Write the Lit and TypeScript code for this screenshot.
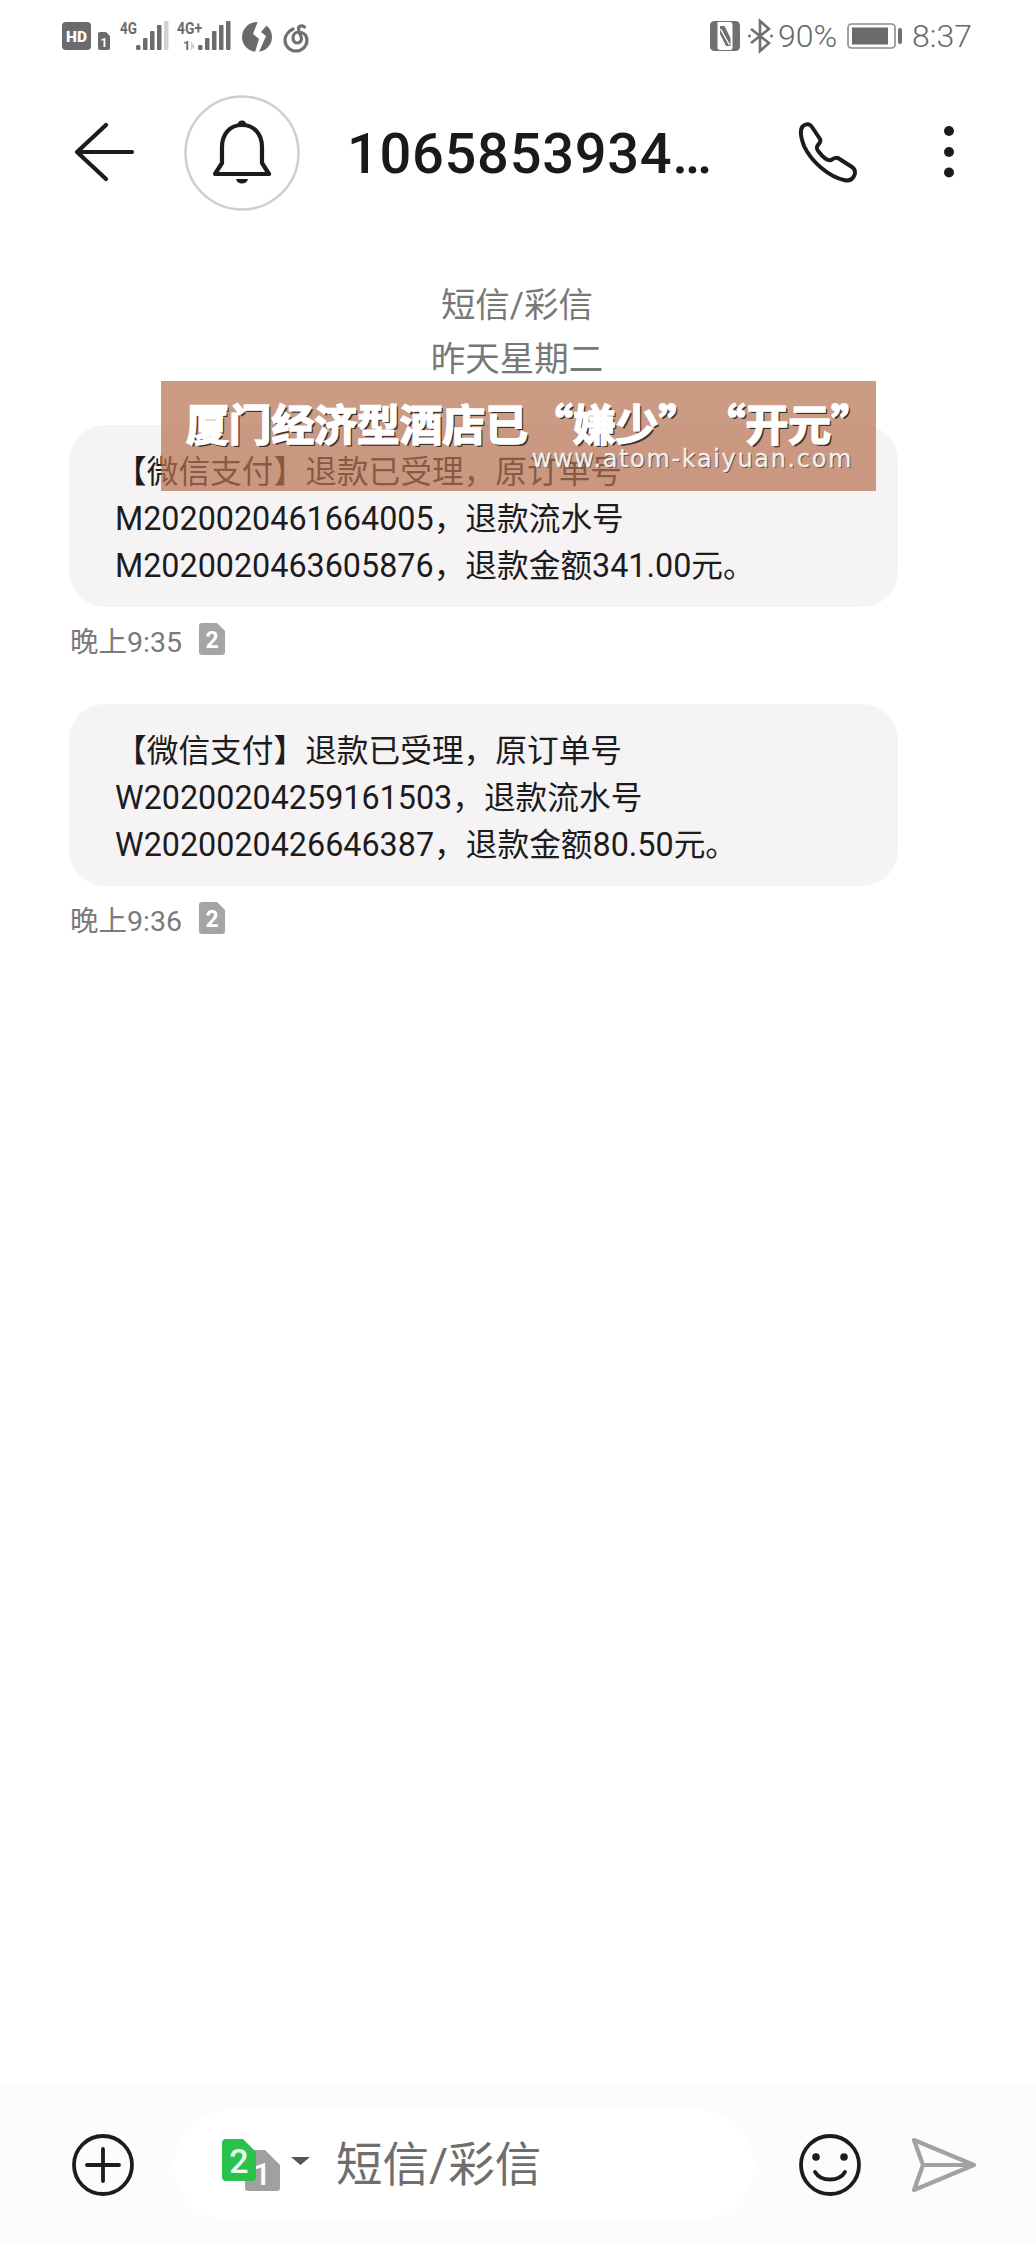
import { LitElement, html, css, svg } from "lit";
import { customElement } from "lit/decorators.js";

const bars = (x0: number, lastLight: boolean) => svg`
  <rect x="${x0}" y="25" width="4.5" height="5" rx="1.5" fill="#6c6c6c"/>
  <rect x="${x0 + 7}" y="18" width="4.5" height="12" rx="1" fill="#6c6c6c"/>
  <rect x="${x0 + 14}" y="11" width="4.5" height="19" rx="1" fill="#6c6c6c"/>
  <rect x="${x0 + 21}" y="5" width="4.5" height="25" rx="1" fill="#6c6c6c"/>
  <rect x="${x0 + 28}" y="1" width="4.5" height="29" rx="1" fill="${lastLight ? "#d2d2d2" : "#6c6c6c"}"/>`;

const simBadge = svg`<svg class="sim" width="26" height="32" viewBox="0 0 26 32">
  <path d="M3 0H18L26 8V29a3 3 0 0 1-3 3H3a3 3 0 0 1-3-3V3a3 3 0 0 1 3-3Z" fill="#a5a5a5"/>
  <text x="13" y="25" text-anchor="middle" font-family="Roboto" font-weight="700" font-size="23" fill="#fff">2</text>
</svg>`;

const mixed = (line: string) =>
  line.split(/([A-Za-z0-9.]+)/).map((part, i) => (i % 2 ? html`<span class="lat">${part}</span>` : part));

const bubble = (lines: string[]) => html`<div class="bubble">${lines.map((l) => html`<div>${mixed(l)}</div>`)}</div>`;

@customElement("app-root")
export class AppRoot extends LitElement {
  static styles = css`
    :host { display: block; width: 1036px; height: 2246px; background: #fff; overflow: hidden; position: relative; font-family: "Roboto", "Noto Sans CJK SC", sans-serif; }
    .page { display: flex; flex-direction: column; height: 2246px; }
    svg { display: block; flex: none; overflow: visible; }

    .status { height: 74px; box-sizing: border-box; padding: 20px 64px 0 62px; display: flex; align-items: flex-start; color: #686868; flex: none; }
    .status-left { display: flex; align-items: flex-start; }
    .status-right { margin-left: auto; display: flex; align-items: center; height: 32px; }
    .gap7 { margin-left: 7px; }
    .gap8 { margin-left: 8px; }
    .cloud { margin: 2px 0 0 10px; }
    .pct { font-size: 32px; font-weight: 300; margin: 0 10px 0 5px; line-height: 32px; }
    .clock { font-size: 32px; font-weight: 300; margin-left: 10px; line-height: 32px; }

    .header { height: 156px; flex: none; display: flex; align-items: center; padding-left: 74px; }
    .avatar { margin-left: 50px; width: 116px; height: 116px; margin-top: 2px; }
    .title { margin-left: 47px; width: 451px; font-size: 56px; font-weight: 500; color: #1a1a1a; line-height: 60px; white-space: nowrap; letter-spacing: 0.7px; margin-top: 4px; }
    .phone { margin-top: 1px; }
    .more { margin-left: 85px; }

    .thread { flex: 1; padding: 48px 0 0 69px; box-sizing: border-box; }
    .date { width: 896px; text-align: center; font-size: 34.5px; line-height: 54px; color: #787878; }
    .dates { margin-bottom: 39px; }
    .bubble { width: 829px; height: 182px; box-sizing: border-box; padding: 25px 46px 0; background: #f6f3f5; border-radius: 36px; font-size: 31.7px; line-height: 46px; color: #1c1c1c; white-space: nowrap; }
    .lat { font-size: 32.3px; }
    .meta { display: flex; align-items: center; height: 34px; margin: 15px 0 48px 1px; font-size: 28.5px; color: #7a7a7a; }
    .sim { margin-left: 17px; }

    .footer { flex: none; height: 163px; box-sizing: border-box; background: #fcfbfd; display: flex; align-items: center; padding: 0 0 0 72px; }
    .pill { margin-left: 40px; width: 580px; height: 110px; box-sizing: border-box; background: #fff; border-radius: 55px; display: flex; align-items: center; padding-left: 48px; }
    .pill-text { margin-left: 26px; font-size: 46.5px; color: #6e6e6e; line-height: 60px; }
    .caret { margin-left: 11px; margin-top: -8px; }
    .smile { margin-left: 45px; }
    .send { margin-left: 51px; }

    .watermark { position: absolute; left: 161px; top: 381px; width: 715px; height: 110px; box-sizing: border-box; background: rgba(183, 114, 82, 0.71); padding: 16px 0 0 25px; }
    .wm-title { font-family: "Noto Sans CJK SC", sans-serif; font-size: 42.75px; line-height: 50px; font-weight: 700; color: #fff; white-space: nowrap; -webkit-text-stroke: 1.6px #fff; text-shadow: 2px 2px 0 #3c3430; }
    .q-open, .q-close { display: inline-block; }
    .q-open { width: 45px; text-align: right; }
    .q-close { width: 42px; text-align: left; }
    .wm-url { position: absolute; right: 23px; bottom: 18px; font-family: "DejaVu Sans", sans-serif; font-size: 24px; line-height: 28px; letter-spacing: 1.65px; color: #f1eeec; white-space: nowrap; -webkit-text-stroke: 0.3px #f1eeec; text-shadow: 1px 1px 0 #5a4a42; }
  `;

  render() {
    return html`
      <div class="page">
        <div class="status">
          <div class="status-left">
            <svg width="50" height="32" viewBox="0 0 50 32">
              <rect x="0" y="2" width="29" height="28" rx="4" fill="#6b6b6b"/>
              <text x="14.5" y="22" text-anchor="middle" font-family="Roboto" font-weight="900" font-size="15.5" fill="#fff">HD</text>
              <path d="M36 14a2 2 0 0 1 2-2h6l4 4v12a2 2 0 0 1-2 2h-8a2 2 0 0 1-2-2Z" fill="#6b6b6b"/>
              <text x="42" y="27" text-anchor="middle" font-family="Roboto" font-weight="700" font-size="12" fill="#fff">1</text>
            </svg>
            <svg class="gap8" width="50" height="32" viewBox="0 0 50 32">
              <text x="0" y="14" font-family="Roboto" font-weight="700" font-size="17" textLength="17" lengthAdjust="spacingAndGlyphs" fill="#6c6c6c">4G</text>
              ${bars(16, true)}
            </svg>
            <svg class="gap7" width="56" height="32" viewBox="0 0 56 32">
              <text x="0" y="14" font-family="Roboto" font-weight="700" font-size="17" textLength="25" lengthAdjust="spacingAndGlyphs" fill="#6c6c6c">4G+</text>
              <text x="6" y="30" font-family="Roboto" font-weight="700" font-size="13" fill="#6c6c6c">1</text>
              <path d="M14 21v9l4-3Z" fill="#cfcfcf"/>
              ${bars(21, false)}
            </svg>
            <svg class="gap8" width="32" height="32" viewBox="0 0 32 32">
              <circle cx="16" cy="17" r="15" fill="#6a6a6a"/>
              <path d="M17 1 27 4 20 12 25 16 18 32 14 32 18 19 12 14Z" fill="#fff"/>
            </svg>
            <svg class="cloud" width="28" height="32" viewBox="0 0 28 32">
              <path d="M10 7C4 10 2 15 2 18a11 11 0 0 0 22 0c0-5-4-8-8-8-3.500 0-6 2.500-6 6s2.500 5 4.500 5 4-2 4-4c0-4-3-6-3-10 0-3 3-4 6-2" fill="none" stroke="#707070" stroke-width="3.200" stroke-linecap="round"/>
            </svg>
          </div>
          <div class="status-right">
            <svg width="30" height="30" viewBox="0 0 30 30">
              <rect width="30" height="30" rx="4.500" fill="#707070"/>
              <path d="M7.500 1H20a2.500 2.500 0 0 1 2.500 2.500V26.500A2.500 2.500 0 0 1 20 29H10A2.500 2.500 0 0 1 7.500 26.500Z" fill="#fff"/>
              <path d="M10 5H14.500L20.500 17V25H16L10 13Z" fill="#707070"/>
              <path d="M10.500 8 19.500 24" stroke="#fff" stroke-width="1.400"/>
            </svg>
            <svg class="gap8" width="25" height="32" viewBox="0 0 25 32">
              <path d="M3 9 21 23 12 31V1L21 9 3 23" fill="none" stroke="#707070" stroke-width="2.600"/>
              <circle cx="1.500" cy="16" r="1.500" fill="#707070"/><circle cx="23.500" cy="16" r="1.500" fill="#707070"/>
            </svg>
            <span class="pct">90%</span>
            <svg width="55" height="28" viewBox="0 0 55 28">
              <rect x="1" y="2" width="47" height="24" rx="3.500" fill="none" stroke="#8a8a8a" stroke-width="1.600"/>
              <rect x="5" y="5.500" width="36" height="17" fill="#6a6a6a"/>
              <rect x="51" y="6" width="4" height="16" rx="2" fill="#707070"/>
            </svg>
            <span class="clock">8:37</span>
          </div>
        </div>

        <div class="header">
          <svg width="60" height="60" viewBox="0 0 60 60">
            <path d="M58 30H4M32 3 3 30 32 57" fill="none" stroke="#1c1c1c" stroke-width="4.200" stroke-linecap="round" stroke-linejoin="round"/>
          </svg>
          <svg class="avatar" viewBox="0 0 116 116">
            <circle cx="58" cy="58" r="56.500" fill="#fff" stroke="#cfcfcf" stroke-width="2.500"/>
            <circle cx="58" cy="30" r="4.500" fill="#1c1c1c"/>
            <path d="M38 68V52c0-13 8-22 20-22s20 9 20 22V68l7 11H31Z" fill="#fff" stroke="#1c1c1c" stroke-width="4.200" stroke-linejoin="round"/>
            <path d="M52 84H64C63 90 53 90 52 84Z" fill="#1c1c1c"/>
          </svg>
          <div class="title">1065853934…</div>
          <svg class="phone" width="60" height="60" viewBox="0 0 60 60">
            <path d="M5 3C9 0 12 1 14 4L22 16C23 18 22 20 20 22 18 24 19 27 21 29 24 33 29 38 33 37 36 35 38 34 40 35L54 44C57 46 58 50 56 53 54 57 50 58 46 57 32 54 14 40 6 23 3 15 1 7 5 3Z" fill="none" stroke="#1c1c1c" stroke-width="4" stroke-linejoin="round"/>
          </svg>
          <svg class="more" width="12" height="54" viewBox="0 0 12 54">
            <circle cx="6" cy="6" r="5" fill="#1c1c1c"/><circle cx="6" cy="27" r="5" fill="#1c1c1c"/><circle cx="6" cy="47.500" r="5" fill="#1c1c1c"/>
          </svg>
        </div>

        <div class="thread">
          <div class="dates">
            <div class="date">短信/彩信</div>
            <div class="date">昨天星期二</div>
          </div>
          ${bubble(["【微信支付】退款已受理，原订单号", "M2020020461664005，退款流水号", "M2020020463605876，退款金额341.00元。"])}
          <div class="meta"><span>晚上9:35</span>${simBadge}</div>
          ${bubble(["【微信支付】退款已受理，原订单号", "W20200204259161503，退款流水号", "W2020020426646387，退款金额80.50元。"])}
          <div class="meta"><span>晚上9:36</span>${simBadge}</div>
        </div>

        <div class="footer">
          <svg width="62" height="62" viewBox="0 0 62 62">
            <circle cx="31" cy="31" r="29" fill="none" stroke="#1c1c1c" stroke-width="3.800"/>
            <path d="M15 31H47M31 15V47" fill="none" stroke="#1c1c1c" stroke-width="3.800" stroke-linecap="round"/>
          </svg>
          <div class="pill">
            <svg width="58" height="52" viewBox="0 0 58 52">
              <path d="M26 11H43L58 26V49a3 3 0 0 1-3 3H26a3 3 0 0 1-3-3V14a3 3 0 0 1 3-3Z" fill="#a0a0a0"/>
              <text x="40" y="46" text-anchor="middle" font-family="Roboto" font-size="32" font-weight="500" fill="#fff">1</text>
              <path d="M4 0H21L34 13V38a4 4 0 0 1-4 4H4a4 4 0 0 1-4-4V4a4 4 0 0 1 4-4Z" fill="#2bc24c"/>
              <text x="17" y="34" text-anchor="middle" font-family="Roboto" font-size="34" font-weight="500" fill="#e9f9ec">2</text>
            </svg>
            <svg class="caret" width="19" height="8" viewBox="0 0 19 8"><path d="M0 0H19L9.500 8Z" fill="#555"/></svg>
            <span class="pill-text">短信/彩信</span>
          </div>
          <svg class="smile" width="62" height="62" viewBox="0 0 62 62">
            <circle cx="31" cy="31" r="29" fill="none" stroke="#1c1c1c" stroke-width="3.800"/>
            <circle cx="17" cy="23" r="3.800" fill="#1c1c1c"/><circle cx="45" cy="23" r="3.800" fill="#1c1c1c"/>
            <path d="M16 38C22 48 40 48 46 38" fill="none" stroke="#1c1c1c" stroke-width="3.800" stroke-linecap="round"/>
          </svg>
          <svg class="send" width="64" height="54" viewBox="0 0 64 54">
            <path d="M2 2 62 27 2 52 11 27ZM11 27H62" fill="none" stroke="#a2a2a2" stroke-width="4.200" stroke-linejoin="round" stroke-linecap="round"/>
          </svg>
        </div>
      </div>
      <div class="watermark">
        <div class="wm-title">厦门经济型酒店已<span class="q-open">“</span>嫌少<span class="q-close">”</span><span class="q-open">“</span>开元<span class="q-close">”</span></div>
        <div class="wm-url">www.atom-kaiyuan.com</div>
      </div>
    `;
  }
}
